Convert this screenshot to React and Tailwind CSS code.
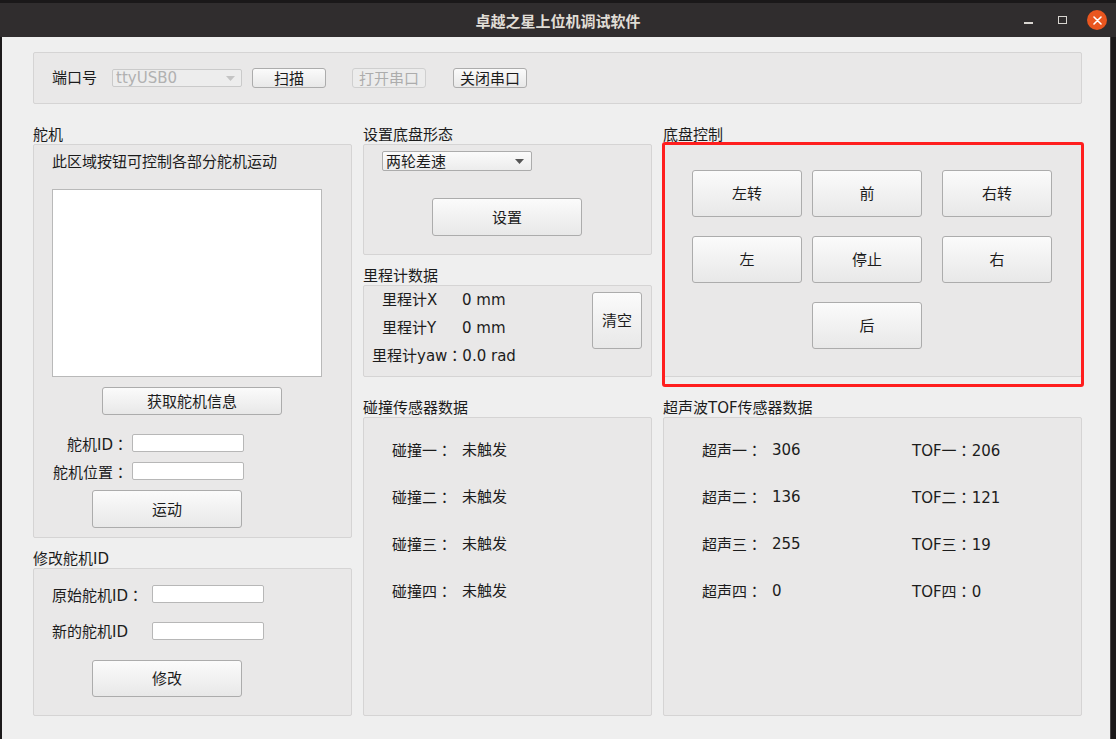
import React from 'react'

const font = { fontFamily: '"DejaVu Sans", "Noto Sans CJK SC", sans-serif' }

// full-width colon centred like the reference (TC style punctuation)
function T({ children }) {
  const parts = String(children).split('：')
  return (
    <>
      {parts.map((p, i) => (
        <React.Fragment key={i}>
          {p}
          {i < parts.length - 1 && <span style={{ fontFamily: '"Noto Sans CJK TC", sans-serif' }}>：</span>}
        </React.Fragment>
      ))}
    </>
  )
}

function Btn({ children, className = '', disabled }) {
  return (
    <button
      className={`flex items-center justify-center rounded-[3px] border pt-[2px] text-[15px] leading-none ${
        disabled
          ? 'border-[#cfcfcf] bg-[#ececec] text-[#acacac]'
          : 'border-[#acacac] bg-linear-to-b from-[#fbfbfb] to-[#e8e8e8] text-[#1c1c1c]'
      } ${className}`}
    >
      {children}
    </button>
  )
}

function Field({ className = '' }) {
  return <div className={`h-[18px] w-[112px] shrink-0 rounded-[2px] border border-[#b7b7b7] bg-white ${className}`} />
}

function Group({ title, className = '', children, top = '' }) {
  return (
    <div className={top}>
      <div className="h-[22px] leading-[26px] text-[15px] text-[#1c1c1c]">{title}</div>
      <div className={`rounded-[2px] border border-[#d5d4d4] bg-[#e9e8e8] ${className}`}>{children}</div>
    </div>
  )
}

function Arrow({ color = '#555' }) {
  return (
    <svg width="9" height="5" viewBox="0 0 9 5">
      <path d="M0 0 L9 0 L4.5 5 Z" fill={color} />
    </svg>
  )
}

export default function App() {
  const bumps = ['碰撞一：', '碰撞二：', '碰撞三：', '碰撞四：']
  const sonic = [
    ['超声一：', '306', 'TOF一：206'],
    ['超声二：', '136', 'TOF二：121'],
    ['超声三：', '255', 'TOF三：19'],
    ['超声四：', '0', 'TOF四：0'],
  ]

  return (
    <div className="flex h-[739px] w-[1116px] flex-col overflow-hidden bg-[#1c1a1b]" style={font}>
      {/* title bar */}
      <div className="flex h-[37px] shrink-0 items-center border-t-[3px] border-[#1a1819] bg-[#302d2e]">
        <div className="flex-1" />
        <div className="pt-[2px] text-[15px] font-bold text-[#e0ddd6]" style={{ fontFamily: '"Noto Sans CJK SC", sans-serif' }}>
          卓越之星上位机调试软件
        </div>
        <div className="flex flex-1 items-center justify-end">
          <div className="mt-[6px] h-[2px] w-[9px] bg-[#d8d5d0]" />
          <div className="ml-[25px] h-[8px] w-[9px] border-[1.5px] border-[#d8d5d0]" />
          <div className="ml-[20px] mr-[9px] flex h-[20px] w-[20px] items-center justify-center rounded-full bg-[#e9561f]">
            <svg width="9" height="9" viewBox="0 0 9 9">
              <path d="M1 1 L8 8 M8 1 L1 8" stroke="#fff" strokeWidth="1.6" strokeLinecap="round" />
            </svg>
          </div>
        </div>
      </div>

      {/* content */}
      <div className="ml-[2px] mr-[5px] flex-1 border-r border-[#4a4748] bg-[#efefef] pl-[31px] pt-[15px] text-[#1c1c1c]">
        {/* serial port bar */}
        <div className="flex h-[52px] w-[1049px] items-center rounded-[2px] border border-[#d5d4d4] bg-[#e9e8e8] pl-[18px] text-[15px]">
          <span className="pt-[1px]">端口号</span>
          <div className="ml-[15px] flex h-[18px] w-[130px] items-center justify-between rounded-[2px] border border-[#cacaca] bg-[#ededed] pl-[3px] pr-[6px] text-[#b1b1b1]">
            <span className="leading-none">ttyUSB0</span>
            <Arrow color="#c4c4c4" />
          </div>
          <Btn className="ml-[10px] h-[20px] w-[74px]">扫描</Btn>
          <Btn disabled className="ml-[26px] h-[20px] w-[74px]">打开串口</Btn>
          <Btn className="ml-[27px] h-[20px] w-[74px]">关闭串口</Btn>
        </div>

        <div className="mt-[18px] flex gap-[11px]">
          {/* left column */}
          <div className="w-[319px]">
            <Group title="舵机" className="flex h-[394px] flex-col px-[18px] pt-[6px]">
              <div className="text-[15px] leading-[22px]">此区域按钮可控制各部分舵机运动</div>
              <div className="mt-[16px] h-[188px] w-[270px] border border-[#b9b9b9] bg-white" />
              <Btn className="ml-[50px] mt-[10px] h-[28px] w-[180px]">获取舵机信息</Btn>
              <div className="mt-[19px] flex h-[18px] items-center overflow-visible text-[15px]">
                <span className="w-[76px] pt-[2px] text-right leading-[16px]"><T>舵机ID：</T></span>
                <Field className="ml-[4px]" />
              </div>
              <div className="mt-[10px] flex h-[18px] items-center text-[15px]">
                <span className="w-[76px] pt-[2px] text-right leading-[16px]"><T>舵机位置：</T></span>
                <Field className="ml-[4px]" />
              </div>
              <Btn className="ml-[40px] mt-[10px] h-[38px] w-[150px]">运动</Btn>
            </Group>

            <Group title="修改舵机ID" top="mt-[8px]" className="flex h-[148px] flex-col px-[18px] pt-[16px]">
              <div className="flex h-[18px] items-center text-[15px]">
                <span className="w-[100px] pt-[2px] leading-[16px]"><T>原始舵机ID：</T></span>
                <Field />
              </div>
              <div className="mt-[19px] flex h-[18px] items-center text-[15px]">
                <span className="w-[100px] pt-[2px] leading-[16px]">新的舵机ID</span>
                <Field />
              </div>
              <Btn className="ml-[40px] mt-[20px] h-[37px] w-[150px]">修改</Btn>
            </Group>
          </div>

          {/* middle column */}
          <div className="w-[289px]">
            <Group title="设置底盘形态" className="flex h-[111px] flex-col pl-[18px] pt-[6px]">
              <div className="flex h-[20px] w-[150px] items-center justify-between rounded-[2px] border border-[#acacac] bg-linear-to-b from-[#fbfbfb] to-[#ececec] pl-[3px] pr-[7px] text-[15px]">
                <span className="pt-[2px] leading-none">两轮差速</span>
                <Arrow />
              </div>
              <Btn className="ml-[50px] mt-[27px] h-[38px] w-[150px]">设置</Btn>
            </Group>

            <Group title="里程计数据" top="mt-[8px]" className="flex h-[92px]">
              <div className="flex-1 pt-[1px] text-[15px]">
                <div className="flex h-[27px] items-center pl-[18px]">
                  <span className="w-[80px]">里程计X</span>
                  <span>0 mm</span>
                </div>
                <div className="flex h-[28px] items-center pl-[18px]">
                  <span className="w-[80px]">里程计Y</span>
                  <span>0 mm</span>
                </div>
                <div className="flex h-[28px] items-center pl-[8px]">
                  <span><T>里程计yaw：0.0 rad</T></span>
                </div>
              </div>
              <Btn className="mr-[9px] mt-[6px] h-[57px] w-[50px]">清空</Btn>
            </Group>

            <Group title="碰撞传感器数据" top="mt-[18px]" className="h-[299px] pl-[28px] pt-[9px]">
              {bumps.map((b) => (
                <div key={b} className="flex h-[47px] items-center text-[15px]">
                  <span className="w-[70px]"><T>{b}</T></span>
                  <span>未触发</span>
                </div>
              ))}
            </Group>
          </div>

          {/* right column */}
          <div className="w-[419px]">
            <div className="relative">
              <Group title="底盘控制" className="flex h-[233px] flex-col gap-[19px] pl-[28px] pt-[25px]">
                <div className="flex">
                  <Btn className="h-[47px] w-[110px]">左转</Btn>
                  <Btn className="ml-[10px] h-[47px] w-[110px]">前</Btn>
                  <Btn className="ml-[20px] h-[47px] w-[110px]">右转</Btn>
                </div>
                <div className="flex">
                  <Btn className="h-[47px] w-[110px]">左</Btn>
                  <Btn className="ml-[10px] h-[47px] w-[110px]">停止</Btn>
                  <Btn className="ml-[20px] h-[47px] w-[110px]">右</Btn>
                </div>
                <div className="flex">
                  <Btn className="ml-[120px] h-[47px] w-[110px]">后</Btn>
                </div>
              </Group>
              {/* annotation highlight */}
              <div className="pointer-events-none absolute left-[-1px] right-[-2px] top-[20px] h-[245px] rounded-[3px] border-[3px] border-[#ff1e1e]" />
            </div>

            <Group title="超声波TOF传感器数据" top="mt-[18px]" className="h-[299px] pl-[38px] pt-[9px]">
              {sonic.map(([a, v, t]) => (
                <div key={a} className="flex h-[47px] items-center text-[15px]">
                  <span className="w-[70px]"><T>{a}</T></span>
                  <span className="w-[140px]">{v}</span>
                  <span><T>{t}</T></span>
                </div>
              ))}
            </Group>
          </div>
        </div>
      </div>
    </div>
  )
}
